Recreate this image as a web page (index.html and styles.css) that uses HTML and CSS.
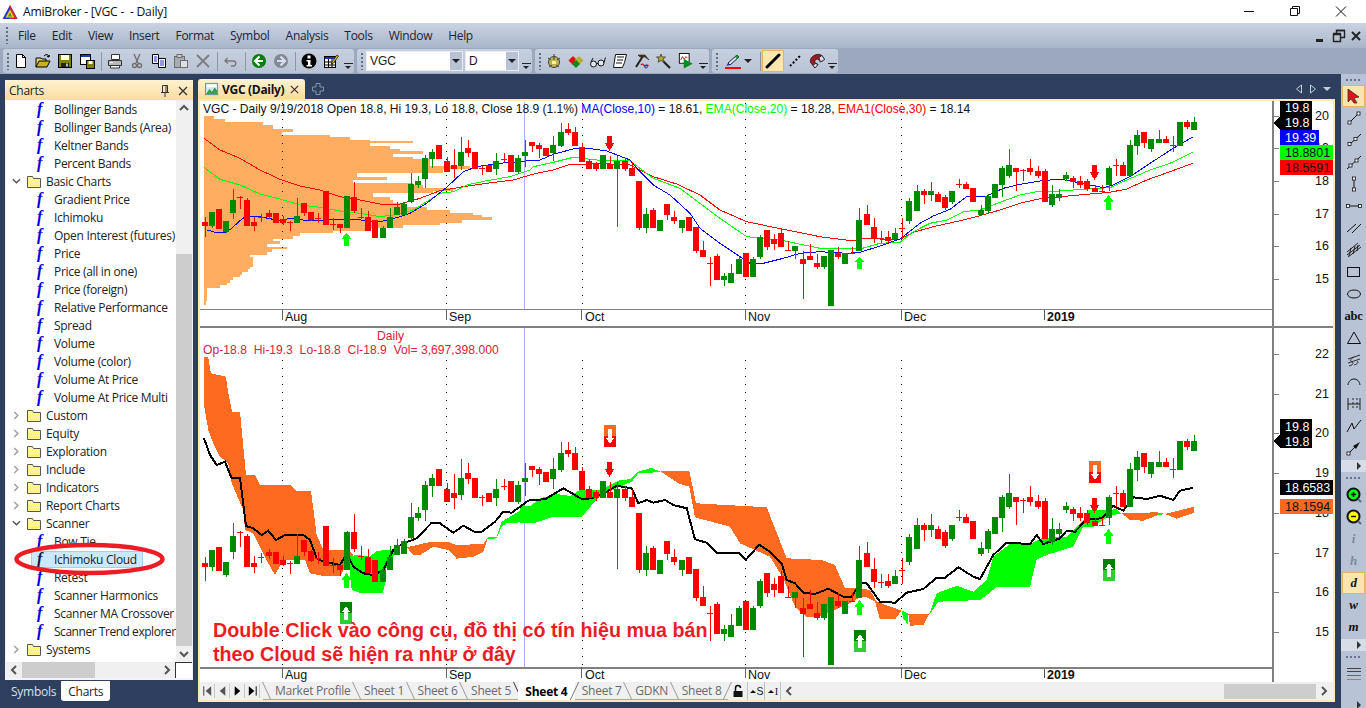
FILE: index.html
```html
<!DOCTYPE html>
<html lang="en">
<head>
<meta charset="utf-8">
<title>AmiBroker - [VGC -  - Daily]</title>
<link rel="stylesheet" href="styles.css">
</head>
<body>
<svg class="defs" width="0" height="0" aria-hidden="true">
  <symbol id="folder" viewBox="0 0 16 16"><path d="M1.5 3.5h5l1 2h7v9h-13z" fill="#fff6a0" stroke="#555"/><path d="M2.5 6.5h11v7h-11z" fill="#ffef6e"/><path d="M3 7h1M5 7h1M7 7h1M9 7h1M11 7h1M4 9h1M6 9h1M8 9h1M10 9h1M12 9h1M3 11h1M5 11h1M7 11h1M9 11h1M11 11h1" stroke="#fff" /></symbol>
  <symbol id="open-arrow" viewBox="0 0 9 10"><path d="M2 1l4 4-4 4" fill="none" stroke="#a0a0a0" stroke-width="1.6"/></symbol>
  <symbol id="down-arrow" viewBox="0 0 10 9"><path d="M1 2l4 4 4-4" fill="none" stroke="#555" stroke-width="1.6"/></symbol>
</svg>

<header class="titlebar">
  <svg class="app-logo" viewBox="0 0 16 16"><path d="M8 1L15.5 15H.5z" fill="#2b3bc4"/><path d="M8 1l7.500 14H8z" fill="#d31f3c"/><path d="M8 5.500L12.400 13.500H3.600z" fill="#f2d21a"/><path d="M8 8.500L10 12.500H6z" fill="#2a9a3a"/></svg>
  <span class="app-title">AmiBroker - [VGC -  - Daily]</span>
  <div class="win-buttons">
    <svg viewBox="0 0 46 22"><path d="M18 10.500h10" stroke="#111"/></svg>
    <svg viewBox="0 0 46 22"><path d="M18.500 7.500h7v7h-7zM20.500 7.500v-2h7v7h-2" fill="none" stroke="#111"/></svg>
    <svg viewBox="0 0 46 22"><path d="M18 5.500l10 10M28 5.500l-10 10" stroke="#111"/></svg>
  </div>
</header>

<nav class="menubar">
  <span class="grip-v"></span>
  <div class="menu-items">
    <span>File</span><span>Edit</span><span>View</span><span>Insert</span><span>Format</span><span>Symbol</span><span>Analysis</span><span>Tools</span><span>Window</span><span>Help</span>
  </div>
  <div class="mdi-buttons">
    <svg viewBox="0 0 16 16"><rect x="2" y="11" width="7" height="3" fill="#222"/></svg>
    <svg viewBox="0 0 16 16"><path d="M2.500 6.500h7v7h-7zM5.500 6v-3.500h8v7H10" fill="none" stroke="#222" stroke-width="1.400"/><path d="M2 5.500h8M5 2.500h9" stroke="#222" stroke-width="1.500"/></svg>
    <svg viewBox="0 0 16 16"><path d="M4 4l8 8M12 4l-8 8" stroke="#222" stroke-width="2"/></svg>
  </div>
</nav>

<div class="toolrow">
  <div class="tb tb-1">
    <span class="grip-v"></span>
    <div class="tbtn"><svg viewBox="0 0 16 16"><path d="M3.500 1.500h6l3 3v10h-9z" fill="#fff" stroke="#000"/><path d="M9.500 1.500v3h3" fill="none" stroke="#000"/></svg></div>
    <div class="tbtn"><svg viewBox="0 0 16 16"><path d="M1 14V5h5l1 1h4v2" fill="#e8d66a" stroke="#000"/><path d="M1 14l3-6h11l-3 6z" fill="#c8b020" stroke="#000"/><path d="M9 3l2-1.500 2 .5 1 2M14 4l-2-.5M14 4l.5-2" fill="none" stroke="#000"/></svg></div>
    <div class="tbtn"><svg viewBox="0 0 16 16"><rect x="1.500" y="1.500" width="13" height="13" fill="#808000" stroke="#000"/><rect x="4" y="2" width="8" height="5" fill="#ffe"/><rect x="4" y="10" width="8" height="4" fill="#222"/><rect x="9" y="10.500" width="2" height="3" fill="#bbb"/></svg></div>
    <div class="tbtn"><svg viewBox="0 0 16 16"><rect x="1.500" y="1.500" width="10" height="10" fill="#fff" stroke="#000"/><rect x="2" y="2" width="9" height="2" fill="#1a3fb0"/><rect x="7.500" y="7.500" width="8" height="8" fill="#808000" stroke="#000"/><rect x="9.500" y="8" width="4" height="3" fill="#ffe"/></svg></div>
    <span class="tsep"></span>
    <div class="tbtn"><svg viewBox="0 0 16 16"><path d="M4.500 1.500h8v5h-8z" fill="#fff" stroke="#333"/><path d="M1.500 7.500h13v5h-13z" fill="#b8b8b8" stroke="#333"/><path d="M3.500 12.500h9v2.500h-9z" fill="#fff" stroke="#333"/><path d="M3 9.500h3" stroke="#fff"/></svg></div>
    <div class="tbtn"><svg viewBox="0 0 16 16"><path d="M5 1l4 9M11 1L7 10" stroke="#6d6d6d" stroke-width="1.300"/><circle cx="5.500" cy="12.500" r="2" fill="none" stroke="#6d6d6d" stroke-width="1.300"/><circle cx="10.500" cy="12.500" r="2" fill="none" stroke="#6d6d6d" stroke-width="1.300"/></svg></div>
    <div class="tbtn"><svg viewBox="0 0 16 16"><path d="M1.500 1.500h6v9h-6z" fill="#fff" stroke="#000"/><path d="M7.500 5.500h7v9h-7z" fill="#fff" stroke="#000"/><path d="M3 4h3M3 6h3M3 8h3M9 8h4M9 10h4M9 12h4" stroke="#1a2fc0"/></svg></div>
    <div class="tbtn"><svg viewBox="0 0 16 16"><rect x="1.500" y="3.500" width="10" height="11" fill="#a8adb5" stroke="#6d6d6d"/><rect x="4" y="1.500" width="5" height="3" fill="#c8c8c8" stroke="#6d6d6d"/><rect x="7.500" y="7.500" width="7" height="7" fill="#dcdfe5" stroke="#6d6d6d"/></svg></div>
    <div class="tbtn"><svg viewBox="0 0 16 16"><path d="M2 2l12 12M14 2L2 14" stroke="#7d7d7d" stroke-width="1.800"/></svg></div>
    <span class="tsep"></span>
    <div class="tbtn"><svg viewBox="0 0 16 16"><path d="M4.500 5l-2.500 3 3 2.500M2.500 8h8c3 0 3 5 0 5H8" fill="none" stroke="#777" stroke-width="1.300"/></svg></div>
    <span class="tsep"></span>
    <div class="tbtn"><svg viewBox="0 0 16 16"><circle cx="8" cy="8" r="7" fill="#008000"/><path d="M8.500 3.500L4 8l4.500 4.500M4.500 8H12" fill="none" stroke="#fff" stroke-width="2.200"/></svg></div>
    <div class="tbtn"><svg viewBox="0 0 16 16"><circle cx="8" cy="8" r="7" fill="#808a94"/><path d="M7.500 3.500L12 8l-4.500 4.500M11.500 8H4" fill="none" stroke="#dde" stroke-width="2.200"/></svg></div>
    <span class="tsep"></span>
    <div class="tbtn"><svg viewBox="0 0 16 16"><circle cx="8" cy="8" r="7.500" fill="#000"/><rect x="6.500" y="2.500" width="3" height="3" fill="#fff"/><path d="M5.500 7h4v5h1.500v1.500H5.500V12H7V8.500H5.500z" fill="#fff"/></svg></div>
    <div class="tbtn"><svg viewBox="0 0 16 16"><rect x="1.500" y="3.500" width="11" height="11" fill="#fff" stroke="#000"/><rect x="2" y="4" width="10" height="2" fill="#1a2fc0"/><path d="M2 9h10M2 12h10M5.500 6v8M9 6v8" stroke="#000"/><path d="M9 9l5-7 1.500 1-5 7-2 1z" fill="#f0d020" stroke="#000" stroke-width=".7"/></svg></div>
    <span class="tmore"></span>
  </div>
  <div class="tb tb-2">
    <span class="grip-v"></span>
    <div class="combo combo-sym"><span>VGC</span><i></i></div>
    <div class="combo combo-int"><span>D</span><i></i></div>
    <span class="tmore"></span>
  </div>
  <div class="tb tb-3">
    <span class="grip-v"></span>
    <div class="tbtn"><svg viewBox="0 0 16 16"><circle cx="8" cy="9" r="5.500" fill="#bdb34a" stroke="#444"/><path d="M8 1v6M2 5l3 2M14 5l-3 2M3 14l3-2M13 14l-3-2" stroke="#444"/><path d="M6 8h4v3H6z" fill="#fff3a0"/></svg></div>
    <div class="tbtn"><svg viewBox="0 0 16 16"><path d="M5 3l4.500 4.500L5 12 .5 7.500z" fill="#e01010"/><path d="M11 3l4.500 4.500L11 12 6.500 7.500z" fill="#b8b030"/><path d="M8 7l4 4-4 4-4-4z" fill="#0a8a1a"/></svg></div>
    <div class="tbtn"><svg viewBox="0 0 16 16"><circle cx="3.500" cy="11" r="3" fill="#dfe9f2" stroke="#111"/><circle cx="11" cy="10" r="3" fill="#dfe9f2" stroke="#111"/><path d="M6.500 10.500h1.500M14 9.500L15.500 4.500M1 9L3 5" fill="none" stroke="#111"/></svg></div>
    <div class="tbtn"><svg viewBox="0 0 16 16"><path d="M3.500 1.500h11l-2 8-2 5H1.500z" fill="#fff" stroke="#111"/><path d="M5 4h7M5 7h6M4 10h6" stroke="#111"/></svg></div>
    <div class="tbtn"><svg viewBox="0 0 16 16"><path d="M2 14L9 3" stroke="#222" stroke-width="2"/><path d="M4 2h7l4 5-4-3H6z" fill="#5a2d0c" stroke="#222" stroke-width=".6"/><path d="M7 12c2-3 3 2 4.500 1s2-1.500 3 0" fill="none" stroke="#c01818" stroke-width="1.300"/><circle cx="12" cy="13.500" r="1.500" fill="none" stroke="#1a2fc0"/></svg></div>
    <div class="tbtn"><svg viewBox="0 0 16 16"><path d="M7 8l7 7" stroke="#222" stroke-width="2.200"/><path d="M5 1l1.200 3H9.500L7 6l1 3.200L5 7.500 2 9.200 3 6 .5 4h3.300z" fill="#b8a820" stroke="#554"/></svg></div>
    <div class="tbtn"><svg viewBox="0 0 18 18"><rect x="1.500" y=".5" width="11" height="11" fill="#fff" stroke="#000"/><path d="M3 8l2-4 2 3 2-3 2 2" fill="none" stroke="#c01818"/><path d="M6.500 6.500l10 5.500-10 5.500z" fill="#0a8a1a"/></svg></div>
    <span class="tmore"></span>
  </div>
  <div class="tb tb-4">
    <span class="grip-v"></span>
    <div class="tbtn tbtn-wide"><svg viewBox="0 0 16 16"><path d="M3 10l2 2 9-8-2-2z" fill="#d8e2ec" stroke="#223"/><path d="M10 4l2 2 2-2-2-2z" fill="#1a9a3a"/><path d="M3 10l-1.500 3 3.500-1z" fill="#1a2fc0"/><rect y="14" width="16" height="2.500" fill="#f00"/></svg></div>
    <i class="dd"></i>
    <span class="tsep tsep-tall"></span>
    <div class="tbtn tbtn-on"><svg viewBox="0 0 16 16"><path d="M2 14L14 2" stroke="#000" stroke-width="3" stroke-linecap="round"/></svg></div>
    <div class="tbtn"><svg viewBox="0 0 16 16"><path d="M3 13l10-10" stroke="#000" stroke-width="2" stroke-dasharray="2 2"/></svg></div>
    <div class="tbtn"><svg viewBox="0 0 16 16"><path d="M6 15L1.500 9.500C0 4 8 -1 13 2.500L15.500 6.500 11.500 9 10 7C8 5 5 7 6 9.500L9 11.500z" fill="#9c1c24" stroke="#111" stroke-width=".7"/><path d="M6 15l-2-2.500 2.500-2L9 11.500zM15.500 6.500L13 2.500l-3 2L11.500 9z" fill="#dde" stroke="#111" stroke-width=".7"/></svg></div>
    <span class="tmore"></span>
  </div>
</div>

<main class="workspace">
  <aside class="left-col">
    <section class="panel">
      <div class="panel-head">
        <span>Charts</span>
        <svg class="ph-pin" viewBox="0 0 12 12"><path d="M3.500 .5h5v7h-5zM2 7.500h8M6 8v4M7 1v6" fill="none" stroke="#333"/></svg>
        <svg class="ph-x" viewBox="0 0 12 12"><path d="M2 2l8 8M10 2l-8 8" stroke="#333" stroke-width="1.300"/></svg>
      </div>
      <div class="panel-body">
        <ul class="tree">
          <li class="leaf"><span class="leaf-in"><b>f</b>Bollinger Bands</span></li>
          <li class="leaf"><span class="leaf-in"><b>f</b>Bollinger Bands (Area)</span></li>
          <li class="leaf"><span class="leaf-in"><b>f</b>Keltner Bands</span></li>
          <li class="leaf"><span class="leaf-in"><b>f</b>Percent Bands</span></li>
          <li class="node"><svg class="chev"><use href="#down-arrow"/></svg><svg class="fold"><use href="#folder"/></svg>Basic Charts</li>
          <li class="leaf"><span class="leaf-in"><b>f</b>Gradient Price</span></li>
          <li class="leaf"><span class="leaf-in"><b>f</b>Ichimoku</span></li>
          <li class="leaf"><span class="leaf-in"><b>f</b>Open Interest (futures)</span></li>
          <li class="leaf"><span class="leaf-in"><b>f</b>Price</span></li>
          <li class="leaf"><span class="leaf-in"><b>f</b>Price (all in one)</span></li>
          <li class="leaf"><span class="leaf-in"><b>f</b>Price (foreign)</span></li>
          <li class="leaf"><span class="leaf-in"><b>f</b>Relative Performance</span></li>
          <li class="leaf"><span class="leaf-in"><b>f</b>Spread</span></li>
          <li class="leaf"><span class="leaf-in"><b>f</b>Volume</span></li>
          <li class="leaf"><span class="leaf-in"><b>f</b>Volume (color)</span></li>
          <li class="leaf"><span class="leaf-in"><b>f</b>Volume At Price</span></li>
          <li class="leaf"><span class="leaf-in"><b>f</b>Volume At Price Multi</span></li>
          <li class="node"><svg class="chev"><use href="#open-arrow"/></svg><svg class="fold"><use href="#folder"/></svg>Custom</li>
          <li class="node"><svg class="chev"><use href="#open-arrow"/></svg><svg class="fold"><use href="#folder"/></svg>Equity</li>
          <li class="node"><svg class="chev"><use href="#open-arrow"/></svg><svg class="fold"><use href="#folder"/></svg>Exploration</li>
          <li class="node"><svg class="chev"><use href="#open-arrow"/></svg><svg class="fold"><use href="#folder"/></svg>Include</li>
          <li class="node"><svg class="chev"><use href="#open-arrow"/></svg><svg class="fold"><use href="#folder"/></svg>Indicators</li>
          <li class="node"><svg class="chev"><use href="#open-arrow"/></svg><svg class="fold"><use href="#folder"/></svg>Report Charts</li>
          <li class="node"><svg class="chev"><use href="#down-arrow"/></svg><svg class="fold"><use href="#folder"/></svg>Scanner</li>
          <li class="leaf"><span class="leaf-in"><b>f</b>Bow Tie</span></li>
          <li class="leaf sel"><span class="leaf-in"><b>f</b>Ichimoku Cloud</span></li>
          <li class="leaf"><span class="leaf-in"><b>f</b>Retest</span></li>
          <li class="leaf"><span class="leaf-in"><b>f</b>Scanner Harmonics</span></li>
          <li class="leaf"><span class="leaf-in"><b>f</b>Scanner MA Crossover</span></li>
          <li class="leaf leaf-long"><span class="leaf-in"><b>f</b>Scanner Trend explorer</span></li>
          <li class="node"><svg class="chev"><use href="#open-arrow"/></svg><svg class="fold"><use href="#folder"/></svg>Systems</li>
        </ul>
        <div class="vscroll">
          <svg class="sb-arrow" viewBox="0 0 16 16"><path d="M4 10l4-4 4 4" fill="none" stroke="#555" stroke-width="2"/></svg>
          <div class="vthumb-space"></div>
          <div class="vthumb"></div>
          <svg class="sb-arrow" viewBox="0 0 16 16"><path d="M4 6l4 4 4-4" fill="none" stroke="#555" stroke-width="2"/></svg>
        </div>
      </div>
      <div class="hscroll">
        <svg class="sb-arrow" viewBox="0 0 16 16"><path d="M10 4L6 8l4 4" fill="none" stroke="#555" stroke-width="2"/></svg>
        <div class="hthumb"></div>
        <svg class="sb-arrow sb-end" viewBox="0 0 16 16"><path d="M6 4l4 4-4 4" fill="none" stroke="#555" stroke-width="2"/></svg>
        <div class="grip-corner"></div>
      </div>
      <svg class="oval" viewBox="0 0 160 36"><ellipse cx="80.500" cy="18" rx="73" ry="14" fill="none" stroke="#ed1c24" stroke-width="4.500"/></svg>
    </section>
    <div class="panel-tabs"><span>Symbols</span><span class="on">Charts</span></div>
  </aside>

  <div class="chart-col">
    <div class="tabstrip">
      <div class="doc-tab">
        <svg viewBox="0 0 16 16"><rect x=".5" y="1.500" width="14" height="13" fill="#cfe6f7" stroke="#5c86b4"/><path d="M1 14l4-6 3 3 3-5 3 4v4z" fill="#3aa040"/><path d="M2 3h11v3H2z" fill="#fff"/></svg>
        <strong>VGC (Daily)</strong>
        <svg class="doc-x" viewBox="0 0 12 12"><path d="M2 2l8 8M10 2l-8 8" stroke="#333" stroke-width="1.300"/></svg>
      </div>
      <svg class="doc-add" viewBox="0 0 12 12"><path d="M4 .5h4v3.500h3.500v4H8v3.500H4V8H.5V4H4z" fill="none" stroke="#8492a8"/></svg>
      <div class="tab-nav">
        <svg viewBox="0 0 10 10"><path d="M7.500 1L2.500 5l5 4z" fill="none" stroke="#c4cdda"/></svg>
        <svg viewBox="0 0 10 10"><path d="M2.500 1l5 4-5 4z" fill="none" stroke="#c4cdda"/></svg>
        <svg viewBox="0 0 10 10"><path d="M1 3h8L5 7z" fill="#c4cdda"/></svg>
      </div>
    </div>
    <div class="frame">
      <svg id="chart" class="chart" viewBox="200 101 1133 581" width="1133" height="581">
        <g id="plot"></g>
        <g class="t-title">
          <text x="203" y="113">VGC - Daily 9/19/2018 Open 18.8, Hi 19.3, Lo 18.8, Close 18.9 (1.1%) <tspan fill="#0000ff">MA(Close,10)</tspan> = 18.61, <tspan fill="#00ff00">EMA(Close,20)</tspan> = 18.28, <tspan fill="#ff0000">EMA1(Close,30)</tspan> = 18.14</text>
          <text class="t-red" x="377" y="340">Daily</text>
          <text class="t-red" x="203" y="354" xml:space="preserve">Op-18.8  Hi-19.3  Lo-18.8  Cl-18.9  Vol= 3,697,398.000</text>
        </g>
        <g class="t-note">
          <text x="213" y="637">Double Click vào công cụ, đồ thị có tín hiệu mua bán</text>
          <text x="213" y="661">theo Cloud sẽ hiện ra như ở đây</text>
        </g>
        <g id="axes"></g>
      </svg>
      <div class="sheets">
        <div class="nav-btns">
          <svg viewBox="0 0 14 14"><path d="M3 2v10" stroke="#333"/><path d="M11 2L5 7l6 5z" fill="#555"/></svg>
          <svg viewBox="0 0 14 14"><path d="M10 2L4 7l6 5z" fill="#555"/></svg>
          <svg viewBox="0 0 14 14"><path d="M4 2l6 5-6 5z" fill="#000"/></svg>
          <svg viewBox="0 0 14 14"><path d="M3 2l6 5-6 5z" fill="#000"/><path d="M11 2v10" stroke="#000"/></svg>
        </div>
        <div class="sheet-tabs">
          <span>Market Profile</span><span>Sheet 1</span><span>Sheet 6</span><span class="before-on">Sheet 5</span><span class="on">Sheet 4</span><span>Sheet 7</span><span>GDKN</span><span>Sheet 8</span>
        </div>
        <div class="sheet-tools">
          <svg viewBox="0 0 14 14"><rect x="2.500" y="7" width="9" height="6" fill="#111"/><path d="M4.500 7V4a2.500 2.500 0 0 1 5 0" fill="none" stroke="#111" stroke-width="1.500"/></svg>
          <span class="st-btn"><i></i>S</span>
          <span class="st-btn st-serif"><i></i>I</span>
        </div>
        <svg class="sheet-prev" viewBox="0 0 12 14"><path d="M8 3L4 7l4 4" fill="none" stroke="#555" stroke-width="2"/></svg>
        <div class="sheet-fill"></div>
        <div class="sheet-thumb"></div>
        <svg class="sheet-next" viewBox="0 0 12 14"><path d="M4 3l4 4-4 4" fill="none" stroke="#555" stroke-width="2"/></svg>
      </div>
    </div>
  </div>

  <aside class="drawbar">
    <div class="dsec dsec-1">
      <span class="grip-h"></span>
      <div class="dbtn dbtn-on"><svg viewBox="0 0 16 16"><path d="M2 1l11 8-5 1 3 5-3 0-3-4-3 3z" fill="#e01414" stroke="#333" stroke-width=".8"/></svg></div>
      <div class="dbtn"><svg viewBox="0 0 16 16"><path d="M4 12L12 4" stroke="#111"/><rect x="2" y="11" width="3" height="3" fill="#fff" stroke="#111" stroke-width=".8"/><rect x="11" y="2" width="3" height="3" fill="#fff" stroke="#111" stroke-width=".8"/></svg></div>
      <div class="dbtn"><svg viewBox="0 0 16 16"><path d="M2 14L15 2" stroke="#111"/><rect x="2" y="10.500" width="3" height="3" fill="#fff" stroke="#111" stroke-width=".8"/><rect x="8" y="5.500" width="3" height="3" fill="#fff" stroke="#111" stroke-width=".8"/></svg></div>
      <div class="dbtn"><svg viewBox="0 0 16 16"><path d="M1 15L15 2" stroke="#111"/><rect x="3" y="10" width="3" height="3" fill="#fff" stroke="#111" stroke-width=".8"/><rect x="9" y="5" width="3" height="3" fill="#fff" stroke="#111" stroke-width=".8"/></svg></div>
      <div class="dbtn"><svg viewBox="0 0 16 16"><path d="M8 3v10" stroke="#111"/><rect x="6.500" y="1" width="3" height="3" fill="#fff" stroke="#111" stroke-width=".8"/><rect x="6.500" y="12" width="3" height="3" fill="#fff" stroke="#111" stroke-width=".8"/></svg></div>
      <div class="dbtn"><svg viewBox="0 0 16 16"><path d="M2 8h12" stroke="#111"/><rect x=".5" y="6.500" width="3" height="3" fill="#fff" stroke="#111" stroke-width=".8"/><rect x="12.500" y="6.500" width="3" height="3" fill="#fff" stroke="#111" stroke-width=".8"/></svg></div>
      <div class="dbtn"><svg viewBox="0 0 16 16"><path d="M1 12L10 4M6 13l9-9" stroke="#111"/></svg></div>
      <div class="dbtn"><svg viewBox="0 0 16 16"><path d="M1 10L12 1M1 13L14 3M2 15L15 5M3 14l2-8M7 12l2-8M11 9l1-6" stroke="#111" stroke-width=".9"/></svg></div>
      <div class="dbtn"><svg viewBox="0 0 16 16"><rect x="1.500" y="3.500" width="12" height="9" fill="none" stroke="#111"/></svg></div>
      <div class="dbtn"><svg viewBox="0 0 16 16"><ellipse cx="8" cy="8" rx="6.500" ry="4" fill="none" stroke="#111"/></svg></div>
      <div class="dbtn dtext">abc</div>
      <div class="dbtn"><svg viewBox="0 0 16 16"><path d="M8 2L14.500 13.500h-13z" fill="none" stroke="#111"/></svg></div>
      <div class="dbtn"><svg viewBox="0 0 16 16"><path d="M2 7l12-4M2 11l12-4M3 14c4-1 5-3 3-4s-2-3 2-5M8 13c4-1 5-3 3-4" fill="none" stroke="#222" stroke-width=".9"/></svg></div>
      <div class="dbtn"><svg viewBox="0 0 16 16"><path d="M2 11C3 3 13 3 14 11" fill="none" stroke="#111"/></svg></div>
      <div class="dbtn"><svg viewBox="0 0 16 16"><path d="M2 2v12M14 2v12M7 2v2M7 6v2M7 10v2M11 2v2M11 6v2M11 10v2M2 8h12" stroke="#111" stroke-width=".9"/></svg></div>
      <div class="dbtn"><svg viewBox="0 0 16 16"><path d="M1 14L6 5l2 6 7-9" fill="none" stroke="#111"/></svg></div>
      <div class="dbtn"><svg viewBox="0 0 16 16"><path d="M2 14L9 7" stroke="#111"/><rect x="1" y="12" width="3" height="3" fill="#fff" stroke="#111" stroke-width=".8"/><path d="M7 6l7-4-4 7z" fill="#111"/></svg></div>
    </div>
    <span class="dmore"></span>
    <div class="dsec dsec-2">
      <span class="grip-h"></span>
      <div class="dbtn"><svg viewBox="0 0 16 16"><circle cx="7.500" cy="7.500" r="6" fill="#0f0" stroke="#111" stroke-width="2"/><path d="M5 7.500h5M7.500 5v5" stroke="#111" stroke-width="1.500"/><path d="M12 12l3 3" stroke="#667" stroke-width="2"/></svg></div>
      <div class="dbtn"><svg viewBox="0 0 16 16"><circle cx="7.500" cy="7.500" r="6" fill="#ff0" stroke="#111" stroke-width="2"/><path d="M5 7.500h5" stroke="#111" stroke-width="1.500"/><path d="M12 12l3 3" stroke="#667" stroke-width="2"/></svg></div>
      <div class="dbtn dlet dim">i</div>
      <div class="dbtn dlet dim">h</div>
      <div class="dbtn dlet dbtn-on">d</div>
      <div class="dbtn dlet">w</div>
      <div class="dbtn dlet">m</div>
    </div>
    <span class="dmore"></span>
    <div class="dsec dsec-3">
      <span class="grip-h"></span>
      <div class="dbtn"><svg viewBox="0 0 16 16"><path d="M1 2.500h14M1 5.500h14" stroke="#444"/><path d="M1 9.500h14" stroke="#666"/><path d="M1 13.500h14" stroke="#888"/></svg></div>
      <span class="dmore dmore-last"></span>
    </div>
  </aside>
</main>
<script src="chart.js"></script>
</body>
</html>
```

FILE: styles.css
```css
* { box-sizing: border-box; }
html, body { margin: 0; padding: 0; }
body {
  width: 1366px; height: 708px; overflow: hidden;
  font: 12px "Open Sans", "Noto Sans", sans-serif;
  letter-spacing: -0.25px;
  color: #1a1a1a; background: #fff;
  display: flex; flex-direction: column;
}
svg { display: block; }
.defs { position: absolute; }

.titlebar { height: 23px; display: flex; align-items: center; padding-left: 2px; background: #fff; flex: none; }
.app-logo { width: 16px; height: 16px; margin-right: 5px; }
.app-title { font-size: 12.2px; white-space: pre; color: #111; }
.win-buttons { margin-left: auto; display: flex; padding-right: 2px; }
.win-buttons svg { width: 46px; height: 22px; }

.menubar { height: 25px; flex: none; display: flex; align-items: center; padding-left: 6px;
  background: linear-gradient(#c9d3e3, #a9b5c9); }
.grip-v { width: 2px; height: 17px; flex: none;
  background: repeating-linear-gradient(#5f7089 0 2px, transparent 2px 4px); }
.menu-items { display: flex; gap: 16px; margin-left: 10px; font-size: 12px; letter-spacing: -0.3px; color: #1c2430; }
.mdi-buttons { margin-left: auto; display: flex; gap: 1px; padding-right: 2px; }
.mdi-buttons svg { width: 16px; height: 16px; }

.toolrow { height: 26px; flex: none; background: #9ba8be; display: flex; align-items: flex-start; padding: 1px 0 0 3px; gap: 3px; }
.tb { height: 24px; background: linear-gradient(#c6d0df, #b8c3d5); border-radius: 3px; display: flex; align-items: center; padding-left: 4px; position: relative; }
.tb-1 { width: 351px; }
.tb-2 { width: 175px; }
.tb-3 { width: 174px; }
.tb-4 { width: 126px; }
.tbtn { width: 22px; height: 22px; display: flex; align-items: center; justify-content: center; flex: none; }
.tbtn svg { width: 16px; height: 16px; }
.tb-1 .tbtn:first-of-type { margin-left: 1px; }
.tb-3 .tbtn:first-of-type { margin-left: 2px; }
.tsep { width: 1px; height: 19px; margin: 0 2px 0 3px; background: #8b97ab; flex: none; }
.tbtn-on { background: #fbe6b0; border: 1px solid #e3b562; }
.tbtn-wide { width: 22px; margin-left: 4px; }
.dd { width: 0; height: 0; margin: 0 4px 0 0; border: 4px solid transparent; border-top-color: #222; border-bottom: 0; flex: none; }
.tsep-tall { margin: 0 1px 0 4px; }
.tmore { position: absolute; right: 1px; bottom: 2px; width: 9px; height: 8px;
  background: linear-gradient(#222 0 1px, transparent 1px 3px, transparent 3px); }
.tmore::after { content: ""; position: absolute; left: 1px; top: 3px; border: 3.5px solid transparent; border-top-color: #222; border-bottom: 0; }

.combo { height: 20px; background: #fff; border: 1px solid #e8ecf2; display: flex; align-items: center; font: 12px "Liberation Sans", sans-serif; letter-spacing: 0; padding-left: 3px; position: relative; flex: none; }
.combo-sym { width: 97px; margin-left: 3px; }
.combo-int { width: 54px; margin-left: 2px; }
.combo i { position: absolute; right: 0; top: 0; bottom: 0; width: 12px; background: #b8c3d5; }
.combo i::after { content: ""; position: absolute; left: 2px; top: 7px; border: 4px solid transparent; border-top-color: #222; border-bottom: 0; }

.workspace { flex: 1; min-height: 0; display: flex; padding-left: 5px;
  background: #2e3f5e repeating-conic-gradient(#2c3d5c 0 25%, #304161 0 50%) 0 0 / 2px 2px; }

.left-col { width: 188px; flex: none; padding-top: 6px; }
.panel { height: 600px; position: relative; background: #fff; display: flex; flex-direction: column; border: 1px solid #f2f4f7; border-top: 0; border-bottom-width: 2px; }
.panel-head { height: 20px; flex: none; display: flex; align-items: center; padding: 1px 4px 0 4px; margin: 0 -1px;
  background: linear-gradient(#fff3d3, #fbdb9d); border-radius: 2px 2px 0 0; font-size: 12px; color: #222; }
.panel-head span { margin-right: auto; padding-left: 0; }
.ph-pin { width: 12px; height: 12px; margin-right: 6px; }
.ph-x { width: 12px; height: 12px; }
.panel-body { flex: 1; min-height: 0; display: flex; }
.tree { flex: 1; list-style: none; margin: 0; padding: 0; overflow: hidden; color: #222; letter-spacing: -0.3px; }
.tree li { height: 18px; display: flex; align-items: center; white-space: nowrap; }
.leaf { padding-left: 25px; }
.leaf-long { letter-spacing: -0.46px; }
.leaf-in { display: flex; align-items: center; height: 17px; padding: 0 3px 0 5px; border: 1px solid transparent; }
.leaf-in b { width: 17px; flex: none; font: italic bold 16px "Liberation Serif", serif; color: #0000e0; }
.sel .leaf-in { background: #cce8ff; border-color: #99d1ff; width: 112px; }
.sel b { color: #10104a; }
.node { padding-left: 6px; }
.chev { width: 9px; height: 9px; margin-right: 5px; flex: none; }
.fold { width: 16px; height: 16px; margin-right: 4px; flex: none; }

.vscroll { width: 16px; flex: none; background: #f0f0f0; display: flex; flex-direction: column; }
.sb-arrow { width: 16px; height: 16px; flex: none; }
.vthumb-space { height: 138px; flex: none; }
.vthumb { flex: 1; background: #cdcdcd; }
.hscroll { height: 16px; flex: none; background: #f0f0f0; display: flex; }
.hthumb { width: 73px; background: #cdcdcd; }
.sb-end { margin-left: auto; }
.grip-corner { width: 17px; background: #fff; border: 1px solid #333; border-width: 1px 0 0 1px; }
.oval { position: absolute; left: 3px; top: 461px; width: 160px; height: 36px; }

.panel-tabs { display: flex; height: 20px; margin-top: 1px; font-size: 12px; color: #d9e0ea; padding-left: 1px; }
.panel-tabs span { display: flex; align-items: center; padding: 0 5px; }
.panel-tabs .on { background: #fff; color: #222; border-radius: 0 0 3px 3px; padding: 0 7px; }

.chart-col { width: 1137px; margin: 0 6px 0 5px; flex: none; padding-top: 5px; }
.tabstrip { height: 20px; display: flex; align-items: center; position: relative; }
.doc-tab { width: 107px; height: 20px; display: flex; align-items: center; padding: 0 5px 0 7px;
  background: linear-gradient(#fff3d3, #fbdb9d); border-radius: 3px 3px 0 0; }
.doc-tab svg:first-child { width: 14px; height: 14px; margin-right: 3px; }
.doc-tab strong { font-size: 12px; color: #111; letter-spacing: -0.3px; }
.doc-x { width: 11px; height: 11px; margin-left: auto; }
.doc-add { width: 12px; height: 12px; margin-left: 7px; }
.tab-nav { margin-left: auto; display: flex; gap: 4px; padding-right: 3px; }
.tab-nav svg { width: 10px; height: 10px; }

.frame { height: 603px; border: 2px solid #ffe9bb; background: #fff; }
.chart { width: 1133px; height: 581px; font: 12px "Liberation Sans", sans-serif; letter-spacing: 0; background: #fff; }
.t-title text { fill: #111; font-size: 12.06px; }
.t-title .t-red { fill: #e0203c; font-size: 12.16px; }
.t-note text { font: bold 19.7px "Liberation Sans", sans-serif; fill: #ed1c24; }
.ax { fill: #111; font-size: 12.5px; }
.ax-b { font-weight: bold; }
.pl { font-size: 12.5px; fill: #fff; }
.pl-d { font-size: 12.5px; fill: #111; }

.sheets { height: 18px; display: flex; align-items: center; background: #f0f0f0; color: #6a6a6a; font-size: 12px; overflow: hidden; }
.nav-btns { display: flex; flex: none; margin-left: 1px; }
.nav-btns svg { width: 14px; height: 14px; margin-right: 1px; border-right: 1px solid #c8c8c8; }
.sheet-tabs { display: flex; height: 18px; flex: none; margin-left: 2px; border-bottom: 1px solid #a8a8a8; }
.sheet-tabs span { padding: 0 6.8px; display: flex; align-items: center; position: relative; white-space: nowrap; }
.sheet-tabs span:first-child { padding-left: 12px; }
.sheet-tabs span::after { content: ""; position: absolute; right: 0; top: 0; bottom: 0; width: 1px; background: #999; transform: skewX(25deg); }
.sheet-tabs span:first-child::before { content: ""; position: absolute; left: 3px; top: 0; bottom: 0; width: 1px; background: #999; transform: skewX(25deg); }
.sheet-tabs .before-on::after { background: #333; }
.sheet-tabs .on { background: #fff; color: #000; font-weight: bold; margin-bottom: -1px; padding: 0 7.5px; }
.sheet-tabs .on::after { background: #777; transform: skewX(-25deg); }
.sheet-tabs span:last-child::after { transform: skewX(-25deg); }
.sheet-tools { display: flex; align-items: center; margin-left: 3px; flex: none; }
.sheet-tools svg { width: 14px; height: 14px; margin-right: 2px; }
.st-btn { width: 17px; height: 18px; border-left: 1px solid #c0c0c0; display: flex; align-items: center; justify-content: center; color: #222; font: 10.5px "Liberation Sans", sans-serif; }
.st-serif { font-family: "Liberation Serif", serif; border-right: 1px solid #c0c0c0; }
.st-btn i { border: 3px solid transparent; border-bottom-color: #111; border-top: 0; margin-right: 1px; }
.sheet-prev { width: 12px; height: 14px; flex: none; margin-left: 2px; }
.sheet-fill { flex: 1; }
.sheet-thumb { width: 92px; height: 15px; background: #cdcdcd; flex: none; }
.sheet-next { width: 12px; height: 14px; flex: none; margin: 0 3px 0 2px; }

.drawbar { width: 25px; flex: none; padding-top: 2px; display: flex; flex-direction: column; background: #b8c3d5; }
.dsec { display: flex; flex-direction: column; }
.grip-h { height: 9px; flex: none; background:
  repeating-linear-gradient(90deg, #65758f 0 2px, transparent 2px 4px) 5px 3px / 16px 2px no-repeat; }
.dbtn { height: 22px; flex: none; display: flex; align-items: center; justify-content: center; }
.dbtn svg { width: 16px; height: 16px; }
.dbtn-on { background: #fbe6b0; border: 1px solid #e3b562; margin: 0 1px; }
.dtext { font: bold 12.5px "Liberation Serif", serif; letter-spacing: -0.2px; color: #111; }
.dlet { font: italic bold 13px "Liberation Serif", serif; color: #111; }
.dim { color: #808a98; }
.dmore { display: block; height: 12px; flex: none; margin: 1px 0 2px; background: #d6dde9;
  position: relative; }
.dmore::after { content: ""; position: absolute; right: 5px; top: 2px; border: 4px solid transparent; border-left-color: #333; border-right: 0; }
.dmore-last { margin: 13px 0 0; background: #b8c3d5; }
.dsec-2 .grip-h { height: 10px; }
.dsec-3 .dbtn { height: 24px; }
```

FILE: chart.js
```js
(function () {
  var GREEN = '#008a00', RED = '#ff0000', LIME = '#00ff00', BLUE = '#0000ff', ORANGE = '#ff6a21';

  /* bars read off the chart: [x, high, top, bottom, low, isRed], in 3x coordinates relative to a crop origin */
  var barGroups = [
    [200, 100, [[15,352,366,377,410,1],[36,335,335,377,385,0],[57,327,327,387,387,1],[78,364,364,397,400,0],[99,268,300,338,356,0],[120,287,291,292,327,1],[141,295,300,377,377,1],[162,350,366,377,392,1],[183,341,352,354,366,1],[207,331,338,350,357,1],[228,338,340,368,368,1],[249,348,358,370,374,1],[270,362,366,368,393,1],[291,294,348,368,368,0],[312,309,309,338,348,1],[333,335,337,361,364,1],[354,340,355,356,368,1],[378,274,274,374,374,1],[399,355,372,373,390,1],[420,372,372,384,398,1],[441,287,289,384,384,0],[462,246,291,332,340,1],[483,325,350,352,358,1],[504,333,351,392,392,1],[525,360,360,413,413,1],[549,378,383,413,413,0],[570,324,351,383,383,0],[591,307,322,346,346,0],[612,307,312,344,344,0],[633,218,252,305,310,0],[654,228,243,256,264,0],[675,165,175,236,264,0],[696,148,156,177,204,0],[717,136,136,177,177,1],[741,170,183,216,216,1],[762,148,195,206,234,1],[783,110,156,198,210,0],[804,120,144,159,172,1],[825,156,156,206,206,1],[846,198,205,206,225,1],[867,195,195,216,216,1],[888,159,183,206,225,0],[911,160,177,178,187,1],[933,165,165,216,216,1],[954,165,174,216,222,0]]],
    [520, 115, [[15,75,111,123,156,0],[36,82,82,93,110,1],[57,84,90,102,130,1],[78,98,98,123,123,1],[99,63,90,114,138,0],[123,24,51,93,97,0],[144,24,42,54,60,1],[165,36,51,93,93,1],[186,84,96,141,141,1],[207,132,138,162,162,1],[228,141,147,162,168,1],[249,120,120,162,162,0],[270,123,147,162,162,1],[291,123,138,162,335,0],[315,132,138,162,168,1],[336,141,159,183,183,1],[357,198,198,339,345,1],[378,279,297,339,354,0],[399,279,285,339,339,1],[420,315,315,348,348,0],[441,267,267,300,315,1],[462,288,306,318,327,1],[486,315,315,339,354,0],[507,306,306,348,348,1],[528,336,336,408,414,1],[549,378,405,426,426,1],[570,426,444,445,513,1],[591,417,423,495,495,1],[612,474,483,495,513,0],[633,447,474,504,504,0],[657,426,432,477,477,0],[678,414,414,486,486,1],[699,426,432,486,486,0],[720,360,366,426,432,0],[741,345,345,396,405,1],[762,357,372,387,405,1],[783,342,354,396,396,1],[804,378,405,406,408,1],[825,393,393,408,432,0],[849,408,432,447,552,1],[870,387,423,435,435,1],[891,417,444,456,462,1],[912,423,423,456,462,0],[933,405,405,573,573,0],[954,396,414,426,432,1],[975,414,414,447,447,0],[996,396,414,415,417,1],[1017,280,315,408,408,0]]],
    [860, 115, [[21,270,297,330,330,1],[42,309,336,369,384,1],[63,348,369,370,384,1],[84,348,366,378,384,1],[105,339,354,372,372,0],[126,309,339,340,372,1],[147,249,258,318,327,0],[171,210,228,288,288,0],[192,222,228,240,267,1],[213,201,228,240,258,0],[234,231,237,261,261,1],[255,240,246,279,285,1],[276,228,228,261,267,0],[297,192,208,210,219,1],[318,201,207,222,222,1],[339,219,219,261,261,1],[363,270,285,300,303,0],[384,237,243,288,297,0],[405,207,207,249,249,0],[426,153,159,210,246,0],[447,102,150,183,189,0],[468,159,159,171,228,1],[489,162,165,166,198,1],[510,132,159,171,180,1],[534,153,168,183,189,1],[555,162,168,261,261,1],[576,210,237,270,276,0],[597,222,237,249,258,0],[618,171,180,192,198,0],[639,183,189,201,219,1],[660,183,198,210,219,1],[681,192,198,222,228,1],[705,210,219,231,231,1],[726,210,228,229,231,1],[747,153,159,210,228,0],[768,132,150,151,183,1],[789,141,150,183,183,1],[810,75,90,183,183,0],[831,45,60,93,120,0],[852,51,51,84,99,1],[873,72,72,102,111,0],[897,45,72,84,84,0],[918,63,72,84,84,1],[939,63,90,91,111,1],[960,21,21,93,93,0],[981,15,21,36,42,1],[1002,6,21,45,45,0]]]
  ];

  function P(ox, oy, flat) {
    var out = [];
    for (var i = 0; i < flat.length; i += 2) out.push([ox + flat[i] / 3, oy + flat[i + 1] / 3]);
    return out;
  }
  function pts(a) { return a.map(function (p) { return p[0].toFixed(1) + ',' + p[1].toFixed(1); }).join(' '); }
  function toLower(u) { return 441 + 1.219 * (u - 122); }

  var html = [];
  function rect(x, y, w, h, fill) { html.push('<rect x="' + x + '" y="' + y + '" width="' + w + '" height="' + h + '" fill="' + fill + '"/>'); }
  function poly(a, fill) { html.push('<polygon points="' + pts(a) + '" fill="' + fill + '"/>'); }
  function line(a, color, w) { html.push('<polyline points="' + pts(a) + '" fill="none" stroke="' + color + '" stroke-width="' + w + '"/>'); }
  function text(x, y, s, cls, fill) { html.push('<text x="' + x + '" y="' + y + '" class="' + cls + '"' + (fill ? ' fill="' + fill + '"' : '') + '>' + s + '</text>'); }

  function bars(map) {
    barGroups.forEach(function (g) {
      g[2].forEach(function (b) {
        var cx = Math.round(g[0] + b[0] / 3);
        var c = b[5] ? RED : GREEN;
        var hi = Math.round(map(g[1] + b[1] / 3)), lo = Math.round(map(g[1] + b[4] / 3));
        var top = Math.round(map(g[1] + b[2] / 3)), bot = Math.round(map(g[1] + b[3] / 3));
        rect(cx, hi, 1, Math.max(lo - hi, 1), c);
        rect(cx - 3, top, 6, Math.max(bot - top, 1), c);
      });
    });
  }
  function upArrow(x, y0, y1, c) {
    var m = y0 + (y1 - y0) * 0.45;
    poly([[x + .5, y0], [x + 5.5, m], [x + 3, m], [x + 3, y1], [x - 2, y1], [x - 2, m], [x - 4.5, m]], c);
  }
  function downArrow(x, y0, y1, c) {
    var m = y0 + (y1 - y0) * 0.45;
    poly([[x + .5, y1], [x + 5.5, m], [x + 3, m], [x + 3, y0], [x - 2, y0], [x - 2, m], [x - 4.5, m]], c);
  }
  function boxUp(x, y) {
    rect(x, y, 12, 11, '#008000'); rect(x, y + 11, 12, 11, '#32cd32');
    poly([[x + 6, y + 4], [x + 10, y + 10], [x + 8, y + 10], [x + 8, y + 18], [x + 4, y + 18], [x + 4, y + 10], [x + 2, y + 10]], '#fff');
  }
  function boxDown(x, y) {
    rect(x, y, 12, 11, ORANGE); rect(x, y + 11, 12, 11, RED);
    poly([[x + 6, y + 19], [x + 10, y + 13], [x + 8, y + 13], [x + 8, y + 4], [x + 4, y + 4], [x + 4, y + 13], [x + 2, y + 13]], '#fff');
  }

  /* volume-at-price profile: [y, right edge] in the first crop's coordinates */
  var profile = [[48,42],[56,75],[66,190],[76,220],[88,280],[96,245],[104,390],[112,450],[120,510],[124,640],[130,510],[138,570],[146,600],[154,670],[162,580],[170,640],[178,690],[190,690],[198,810],[208,730],[218,470],[232,560],[240,460],[248,640],[256,670],[264,760],[272,700],[280,520],[290,570],[300,580],[310,610],[320,680],[330,750],[338,820],[346,845],[352,876],[360,785],[368,720],[376,610],[384,510],[392,400],[400,300],[408,280],[416,220],[424,240],[432,200],[440,260],[448,215],[456,200],[464,150],[472,160],[484,160],[490,160],[500,150],[508,145],[516,125],[524,120],[532,100],[540,90],[548,80],[556,60],[564,22],[580,22],[592,22],[604,18],[616,12],[620,12]];
  html.push('<g shape-rendering="crispEdges">');
  for (var i = 0; i + 1 < profile.length; i++) {
    var y = Math.round(100 + profile[i][0] / 3), y2 = Math.round(100 + profile[i + 1][0] / 3);
    if (y2 > y) rect(204, y, Math.round(200 + profile[i][1] / 3) - 204, y2 - y, '#ffad60');
  }
  /* month grid lines */
  [282.5, 446.5, 582, 745, 901].forEach(function (x) {
    var xx = Math.floor(x);
    for (var yy = 103; yy < 304; yy += 8) rect(xx, yy, 1, 1, '#000');
    for (var yy2 = 360; yy2 < 665; yy2 += 8) rect(xx, yy2, 1, 1, '#000');
  });
  rect(524, 102, 1, 207, '#aab0ff');
  rect(524, 327, 1, 340, '#aab0ff');

  /* moving averages */
  var blue = P(200,100,[22,390,45,397,75,399,95,385,120,362,135,350,180,350,240,362,270,355,330,363,400,358,470,358,510,365,540,365,600,350,630,340,680,310,740,262,790,215,830,200,900,190,990,182])
    .concat(P(520,115,[60,135,100,118,170,99,200,99,260,108,330,135,360,170,400,210,450,240,510,295,540,340,600,385,660,425,690,445,730,445,790,430,840,415,900,410,980,415,1020,412]))
    .concat(P(860,115,[60,393,120,372,180,325,220,303,270,283,320,245,380,243,430,220,480,208,540,198,600,192,640,200,690,210,730,218,760,210,810,185,870,145,940,100,998,66]));
  var lime = P(200,100,[12,202,60,238,120,255,180,282,240,297,300,315,360,322,420,333,480,340,540,350,600,342,640,330,680,305,720,280,760,275,800,255,860,242,930,230,990,210])
    .concat(P(520,115,[40,155,100,142,160,127,230,135,330,138,400,190,480,220,540,265,600,310,680,365,780,375,900,400,1020,402]))
    .concat(P(860,115,[60,385,120,382,160,350,210,325,260,315,310,290,360,285,420,262,480,240,530,230,600,228,680,222,750,218,800,195,870,165,930,145,998,112]));
  var red = P(200,100,[12,115,60,150,120,175,180,210,240,238,300,258,360,270,420,290,480,300,540,312,600,312,660,295,720,272,790,260,860,250,940,240,990,225])
    .concat(P(520,115,[50,175,100,165,150,148,250,146,330,150,400,185,470,207,540,240,600,285,680,320,800,345,900,365,1000,378,1020,370]))
    .concat(P(860,115,[60,372,120,372,160,352,220,335,300,317,360,302,420,285,480,265,530,253,600,245,680,238,750,232,800,222,860,195,930,170,998,145]));
  line(red, RED, 1); line(lime, LIME, 1); line(blue, BLUE, 1);
  bars(function (u) { return u; });
  upArrow(346, 233, 246, LIME); upArrow(859, 257, 269, LIME); upArrow(1108, 195, 210, LIME);
  downArrow(609, 136, 151, RED); downArrow(1094, 165, 180, RED);

  /* Ichimoku clouds */
  poly(P(200,330,[12,80,24,80,33,130,78,140,84,185,96,245,120,245,138,435,165,435,180,465,270,465,290,483,333,483,350,615,370,660,445,660,460,675,450,690,420,738,370,738,330,730,315,690,270,690,250,690,225,735,205,700,175,640,160,610,135,600,130,540,95,460,85,400,60,380,40,340,25,300,12,225]), ORANGE);
  poly(P(200,330,[445,680,470,675,510,680,530,662,575,660,590,645,595,655,580,680,556,720,556,760,548,788,480,788,455,780]), LIME);
  poly(P(200,330,[620,652,690,636,745,636,770,645,850,642,865,620,850,665,820,680,770,686,745,660,700,650,660,675,640,675]), ORANGE);
  poly(P(200,330,[865,620,890,620,905,575,975,533,990,533,990,575,920,580,905,590,890,625,865,628]), LIME);
  poly(P(520,420,[0,255,30,258,60,235,110,222,150,228,180,210,240,210,300,180,330,178,355,155,395,143,420,155,395,158,355,160,335,185,300,200,245,225,220,250,185,292,100,290,40,310,0,310]), LIME);
  poly(P(520,420,[420,153,508,153,528,250,740,262,800,415,905,420,945,435,975,505,1020,505,1020,530,1000,545,900,590,860,590,825,560,790,475,750,410,660,370,630,320,525,292,508,200,475,190]), ORANGE);
  poly(P(860,420,[0,505,30,510,50,545,125,572,105,598,60,598,45,545,15,530,0,530]), ORANGE);
  poly(P(860,420,[125,572,145,580,145,615,130,595]), LIME);
  poly(P(860,420,[145,582,208,582,190,615,150,617]), ORANGE);
  poly(P(860,420,[208,582,230,520,290,497,340,515,380,480,400,410,450,372,510,372,545,355,620,350,670,300,685,270,730,270,770,268,785,282,750,285,700,320,670,320,640,380,560,405,530,418,510,500,410,502,360,540,235,545,210,582]), LIME);
  poly(P(860,420,[785,280,890,277,895,285,850,302,810,300]), ORANGE);
  poly(P(860,420,[890,277,915,282,895,285]), LIME);
  poly(P(860,420,[915,282,1002,260,1002,278,950,296]), ORANGE);

  var tenkan = P(200,330,[12,325,30,375,50,405,75,395,95,445,120,445,138,588,160,595,185,615,205,602,228,630,255,615,310,615,330,630,350,685,370,695,420,705,440,670,460,710,490,730,520,735,550,720,580,660,610,640,650,625,695,578,720,580,760,608,790,587,825,606,845,605,885,575,910,545,935,548,985,512])
    .concat(P(520,420,[30,240,75,238,130,205,185,237,215,235,260,215,290,197,335,205,355,250,380,240,400,248,435,240,460,255,500,265,525,358,560,368,590,398,655,398,677,420,718,374,750,395,785,430,800,480,825,490,850,518,885,522,925,506,970,530,995,530,1020,490]))
    .concat(P(860,420,[20,490,60,545,105,548,140,518,190,507,230,473,255,473,295,442,340,470,360,477,400,405,440,368,510,372,530,345,550,372,600,355,620,332,645,335,680,298,725,295,760,258,790,272,820,232,860,237,900,227,940,240,960,212,1000,203]));
  line(tenkan, '#000', 2);
  bars(toLower);
  upArrow(346, 573, 588, LIME); upArrow(859, 600, 615, LIME); upArrow(1108, 529, 544, LIME);
  downArrow(609, 462, 477, RED); downArrow(1094, 498, 513, RED);
  boxUp(340, 602); boxUp(854, 630); boxUp(1103, 559);
  boxDown(604, 425); boxDown(1089, 461);

  [1044].forEach(function (x) { rect(x, 309, 1, 11, '#555'); rect(x, 667, 1, 11, '#555'); });
  html.push('</g>');
  document.getElementById('plot').innerHTML = html.join('');

  /* axes and labels */
  html = [];
  html.push('<g shape-rendering="crispEdges">');
  rect(200, 309, 1073, 1, '#808080');
  rect(200, 326, 1133, 2, '#808080');
  rect(200, 667, 1073, 2, '#808080');
  rect(1272, 101, 2, 582, '#808080');
  [282, 446, 581, 745, 901].forEach(function (x) { rect(x, 309, 1, 11, '#666'); rect(x, 667, 1, 11, '#666'); });
  [116, 148, 181.500, 214, 246, 279].forEach(function (y) { rect(1274, Math.floor(y), 5, 1, '#808080'); });
  [354, 394, 433, 473, 513, 553, 592, 632].forEach(function (y) { rect(1274, y, 5, 1, '#808080'); });
  html.push('</g>');
  [['Aug',285],['Sep',449],['Oct',585],['Nov',748],['Dec',904]].forEach(function (m) {
    text(m[1], 321, m[0], 'ax'); text(m[1], 679, m[0], 'ax');
  });
  text(1047, 321, '2019', 'ax ax-b'); text(1047, 679, '2019', 'ax ax-b');
  [[20,120],[19,152],[18,185],[17,218],[16,250],[15,283]].forEach(function (l) { text(1315, l[1], l[0], 'ax'); });
  [[22,358],[21,398],[20,437],[19,477],[18,517],[17,557],[16,596],[15,636]].forEach(function (l) { text(1315, l[1], l[0], 'ax'); });

  html.push('<g shape-rendering="crispEdges">');
  function tag(y, w, h, bg) { rect(1280, y, w, h, bg); }
  function pointer(y) { html.push('<polygon points="1280,' + (y - 7) + ' 1280,' + (y + 7) + ' 1273,' + y + '" fill="#000"/>'); }
  tag(101, 32, 29, '#000'); pointer(123);
  tag(130, 39, 15, BLUE); tag(145, 53, 15, LIME); tag(160, 53, 15, RED);
  tag(419, 32, 29, '#000'); pointer(441);
  tag(480, 53, 15, '#000'); tag(499, 53, 15, '#ff6820');
  html.push('</g>');
  text(1285, 112, '19.8', 'pl'); text(1285, 127, '19.8', 'pl');
  text(1285, 142, '19.39', 'pl'); text(1285, 157, '18.8801', 'pl-d'); text(1285, 172, '18.5591', 'pl-d');
  text(1285, 431, '19.8', 'pl'); text(1285, 446, '19.8', 'pl');
  text(1285, 492, '18.6583', 'pl'); text(1285, 511, '18.1594', 'pl-d');
  document.getElementById('axes').innerHTML = html.join('');
})();
```
